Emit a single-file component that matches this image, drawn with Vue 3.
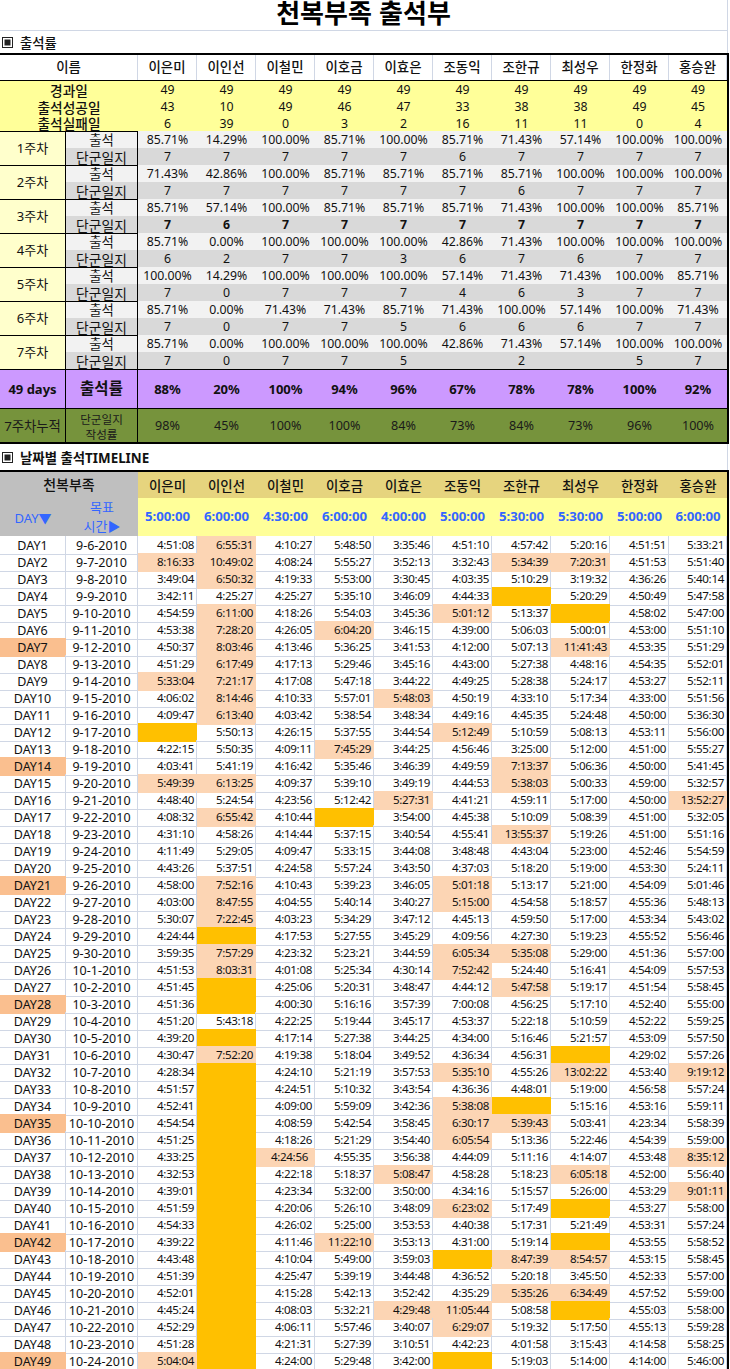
<template>
  <div class="page">
    <h1 class="title">천복부족 출석부</h1>

    <div class="section">
      <svg class="mark" width="11" height="11" viewBox="0 0 11 11">
        <rect x="0.5" y="0.5" width="10" height="10" fill="#fff" stroke="#222" />
        <rect x="2.5" y="2.5" width="6" height="6" fill="#222" />
      </svg>
      <span>출석률</span>
    </div>

    <!-- 출석률 표 -->
    <div class="sheet">
      <div class="row name-row">
        <div class="cell wide">이름</div>
        <div v-for="name in names" :key="name" class="cell">{{ name }}</div>
      </div>

      <div v-for="line in summary" :key="line.label" class="row sum-row">
        <div class="cell wide">{{ line.label }}</div>
        <div v-for="(v, i) in line.values" :key="i" class="cell num">{{ v }}</div>
      </div>

      <div v-for="(week, w) in weeks" :key="w" class="row week">
        <div class="cell week-label">{{ w + 1 }}주차</div>
        <div class="cell sub sub-top">출석</div>
        <div v-for="(v, i) in week.rate" :key="i" class="cell num light">{{ v }}</div>
        <div class="cell sub sub-bottom">단군일지</div>
        <div
          v-for="(v, i) in week.diary"
          :key="'d' + i"
          class="cell num dark"
          :class="{ bold: w === 2 }"
        >{{ v }}</div>
      </div>

      <div class="row purple">
        <div class="cell split days">49 days</div>
        <div class="cell split big">출석률</div>
        <div v-for="(v, i) in totalRate" :key="i" class="cell pct">{{ v }}</div>
      </div>

      <div class="row green">
        <div class="cell split acc">7주차누적</div>
        <div class="cell split note">단군일지<br />작성률</div>
        <div v-for="(v, i) in diaryRate" :key="i" class="cell green-num">{{ v }}</div>
      </div>
    </div>

    <div class="section section-2">
      <svg class="mark" width="11" height="11" viewBox="0 0 11 11">
        <rect x="0.5" y="0.5" width="10" height="10" fill="#fff" stroke="#222" />
        <rect x="2.5" y="2.5" width="6" height="6" fill="#222" />
      </svg>
      <span>날짜별 출석TIMELINE</span>
    </div>

    <!-- 날짜별 표 -->
    <div class="sheet timeline">
      <div class="head-grid">
        <div class="corner">
          <div class="corner-title">천복부족</div>
          <div class="corner-sub">
            <div class="corner-day">DAY▼</div>
            <div class="corner-goal">목표<br />시간▶</div>
          </div>
        </div>
        <div v-for="name in names" :key="name" class="gold">{{ name }}</div>
        <div v-for="(g, i) in goals" :key="i" class="goal">{{ g }}</div>
      </div>

      <div v-for="(row, r) in timeline" :key="r" class="row day-row">
        <div class="cell day" :class="{ sunday: (r + 1) % 7 === 0 }">DAY{{ r + 1 }}</div>
        <div class="cell date">{{ dateOf(r) }}</div>
        <div v-for="(t, i) in row" :key="i" class="cell time" :class="t.kind">{{ t.text }}</div>
      </div>
    </div>
  </div>
</template>

<script setup>
const names = ['이은미', '이인선', '이철민', '이호금', '이효은', '조동익', '조한규', '최성우', '한정화', '홍승완'];

const summary = [
  { label: '경과일', values: [49, 49, 49, 49, 49, 49, 49, 49, 49, 49] },
  { label: '출석성공일', values: [43, 10, 49, 46, 47, 33, 38, 38, 49, 45] },
  { label: '출석실패일', values: [6, 39, 0, 3, 2, 16, 11, 11, 0, 4] }
];

const pct = (list) => list.map((v) => v + '%');

const weeks = [
  { rate: pct(['85.71', '14.29', '100.00', '85.71', '100.00', '85.71', '71.43', '57.14', '100.00', '100.00']), diary: [7, 7, 7, 7, 7, 6, 7, 7, 7, 7] },
  { rate: pct(['71.43', '42.86', '100.00', '85.71', '85.71', '85.71', '85.71', '100.00', '100.00', '100.00']), diary: [7, 7, 7, 7, 7, 7, 6, 7, 7, 7] },
  { rate: pct(['85.71', '57.14', '100.00', '85.71', '85.71', '85.71', '71.43', '100.00', '100.00', '85.71']), diary: [7, 6, 7, 7, 7, 7, 7, 7, 7, 7] },
  { rate: pct(['85.71', '0.00', '100.00', '100.00', '100.00', '42.86', '71.43', '100.00', '100.00', '100.00']), diary: [6, 2, 7, 7, 3, 6, 7, 6, 7, 7] },
  { rate: pct(['100.00', '14.29', '100.00', '100.00', '100.00', '57.14', '71.43', '71.43', '100.00', '85.71']), diary: [7, 0, 7, 7, 7, 4, 6, 3, 7, 7] },
  { rate: pct(['85.71', '0.00', '71.43', '71.43', '85.71', '71.43', '100.00', '57.14', '100.00', '71.43']), diary: [7, 0, 7, 7, 5, 6, 6, 6, 7, 7] },
  { rate: pct(['85.71', '0.00', '100.00', '100.00', '100.00', '42.86', '71.43', '57.14', '100.00', '100.00']), diary: [7, 0, 7, 7, 5, '', 2, '', 5, 7] }
];

const totalRate = pct([88, 20, 100, 94, 96, 67, 78, 78, 100, 92]);
const diaryRate = pct([98, 45, 100, 100, 84, 73, 84, 73, 96, 100]);

const goals = ['5:00:00', '6:00:00', '4:30:00', '6:00:00', '4:00:00', '5:00:00', '5:30:00', '5:30:00', '5:00:00', '6:00:00'];

const raw = `
4:51:08 *6:55:31 4:10:27 5:48:50 3:35:46 4:51:10 4:57:42 5:20:16 4:51:51 5:33:21
*8:16:33 *10:49:02 4:08:24 5:55:27 3:52:13 3:32:43 *5:34:39 *7:20:31 4:51:53 5:51:40
3:49:04 *6:50:32 4:19:33 5:53:00 3:30:45 4:03:35 5:10:29 3:19:32 4:36:26 5:40:14
3:42:11 4:25:27 4:25:27 5:35:10 3:46:09 4:44:33 - 5:20:29 4:50:49 5:47:58
4:54:59 *6:11:00 4:18:26 5:54:03 3:45:36 *5:01:12 5:13:37 - 4:58:02 5:47:00
4:53:38 *7:28:20 4:26:05 *6:04:20 3:46:15 4:39:00 5:06:03 5:00:01 4:53:00 5:51:10
4:50:37 *8:03:46 4:13:46 5:36:25 3:41:53 4:12:00 5:07:13 *11:41:43 4:53:35 5:51:29
4:51:29 *6:17:49 4:17:13 5:29:46 3:45:16 4:43:00 5:27:38 4:48:16 4:54:35 5:52:01
*5:33:04 *7:21:17 4:17:08 5:47:18 3:44:22 4:49:25 5:28:38 5:24:17 4:53:27 5:52:11
4:06:02 *8:14:46 4:10:33 5:57:01 *5:48:03 4:50:19 4:33:10 5:17:34 4:33:00 5:51:56
4:09:47 *6:13:40 4:03:42 5:38:54 3:48:34 4:49:16 4:45:35 5:24:48 4:50:00 5:36:30
- 5:50:13 4:26:15 5:37:55 3:44:54 *5:12:49 5:10:59 5:08:13 4:53:11 5:56:00
4:22:15 5:50:35 4:09:11 *7:45:29 3:44:25 4:56:46 3:25:00 5:12:00 4:51:00 5:55:27
4:03:41 5:41:19 4:16:42 5:35:46 3:46:39 4:49:59 *7:13:37 5:06:36 4:50:00 5:41:45
*5:49:39 *6:13:25 4:09:37 5:39:10 3:49:19 4:44:53 *5:38:03 5:00:33 4:59:00 5:32:57
4:48:40 5:24:54 4:23:56 5:12:42 *5:27:31 4:41:21 4:59:11 5:17:00 4:50:00 *13:52:27
4:08:32 *6:55:42 4:10:44 - 3:54:00 4:45:38 5:10:09 5:08:39 4:51:00 5:32:05
4:31:10 4:58:26 4:14:44 5:37:15 3:40:54 4:55:41 *13:55:37 5:19:26 4:51:00 5:51:16
4:11:49 5:29:05 4:09:47 5:33:15 3:44:08 3:48:48 4:43:04 5:23:00 4:52:46 5:54:59
4:43:26 5:37:51 4:24:58 5:57:24 3:43:50 4:37:03 5:18:20 5:19:00 4:53:30 5:24:11
4:58:00 *7:52:16 4:10:43 5:39:23 3:46:05 *5:01:18 5:13:17 5:21:00 4:54:09 5:01:46
4:03:00 *8:47:55 4:04:55 5:40:14 3:40:27 *5:15:00 4:54:58 5:18:57 4:55:36 5:48:13
5:30:07 *7:22:45 4:03:23 5:34:29 3:47:12 4:45:13 4:59:50 5:17:00 4:53:34 5:43:02
4:24:44 - 4:17:53 5:27:55 3:45:29 4:09:56 4:27:30 5:19:23 4:55:52 5:56:46
3:59:35 *7:57:29 4:23:32 5:23:21 3:44:59 *6:05:34 *5:35:08 5:29:00 4:51:36 5:57:00
4:51:53 *8:03:31 4:01:08 5:25:34 4:30:14 *7:52:42 5:24:40 5:16:41 4:54:09 5:57:53
4:51:45 - 4:25:06 5:20:31 3:48:47 4:44:12 *5:47:58 5:19:17 4:51:54 5:58:45
4:51:36 - 4:00:30 5:16:16 3:57:39 7:00:08 4:56:25 5:17:10 4:52:40 5:55:00
4:51:20 5:43:18 4:22:25 5:19:44 3:45:17 4:53:37 5:22:18 5:10:59 4:52:22 5:59:25
4:39:20 - 4:17:14 5:27:38 3:44:25 4:34:00 5:16:46 5:21:57 4:53:09 5:57:50
4:30:47 *7:52:20 4:19:38 5:18:04 3:49:52 4:36:34 4:56:31 - 4:29:02 5:57:26
4:28:34 - 4:24:10 5:21:19 3:57:53 *5:35:10 4:55:26 *13:02:22 4:53:40 *9:19:12
4:51:57 - 4:24:51 5:10:32 3:43:54 4:36:36 4:48:01 5:19:00 4:56:58 5:57:24
4:52:41 - 4:09:00 5:59:09 3:42:36 *5:38:08 - 5:15:16 4:53:16 5:59:11
4:54:54 - 4:08:59 5:42:54 3:58:45 *6:30:17 *5:39:43 5:03:41 4:23:34 5:58:39
4:51:25 - 4:18:26 5:21:29 3:54:40 *6:05:54 5:13:36 5:22:46 4:54:39 5:59:00
4:33:25 - ^4:24:56 4:55:35 3:56:38 4:44:09 5:11:16 4:14:07 4:53:48 *8:35:12
4:32:53 - 4:22:18 5:18:37 *5:08:47 4:58:28 5:18:23 *6:05:18 4:52:00 5:56:40
4:39:01 - 4:23:34 5:32:00 3:50:00 4:34:16 5:15:57 5:26:00 4:53:29 *9:01:11
4:51:59 - 4:20:06 5:26:10 3:48:09 *6:23:02 5:17:49 - 4:53:27 5:58:00
4:54:33 - 4:26:02 5:25:00 3:53:53 4:40:38 5:17:31 5:21:49 4:53:31 5:57:24
4:39:22 - 4:11:46 *11:22:10 3:53:13 4:31:00 5:19:14 - 4:53:55 5:58:52
4:43:48 - 4:10:04 5:49:00 3:59:03 - *8:47:39 *8:54:57 4:53:15 5:58:45
4:51:39 - 4:25:47 5:39:19 3:44:48 4:36:52 5:20:18 3:45:50 4:52:33 5:57:00
4:52:01 - 4:15:28 5:42:13 3:52:42 4:35:29 *5:35:26 *6:34:49 4:57:52 5:59:00
4:45:24 - 4:08:03 5:32:21 *4:29:48 *11:05:44 5:08:58 - 4:55:03 5:58:00
4:52:29 - 4:06:11 5:57:46 3:40:07 *6:29:07 5:19:32 5:17:50 4:55:13 5:59:28
4:51:28 - 4:21:31 5:27:39 3:10:51 4:42:23 4:01:58 3:15:43 4:14:58 5:58:25
*5:04:04 - 4:24:00 5:29:48 3:42:00 - 5:19:03 5:14:00 4:14:00 5:46:00
`;

const parseTime = (s) => {
  if (s === '-') return { text: '', kind: 'absent' };
  if (s[0] === '*') return { text: s.slice(1), kind: 'late' };
  if (s[0] === '^') return { text: s.slice(1), kind: 'late indent' };
  return { text: s, kind: '' };
};

const timeline = raw.trim().split('\n').map((line) => line.split(' ').map(parseTime));

const dateOf = (r) => {
  const d = new Date(2010, 8, 6 + r);
  return `${d.getMonth() + 1}-${d.getDate()}-${d.getFullYear()}`;
};
</script>

<style scoped>
.page {
  width: 730px;
  height: 1369px;
  overflow: hidden;
  background: #fff;
  color: #111;
  font-family: "Noto Sans", "Noto Sans CJK KR", sans-serif;
}

/* ==================== 제목 ==================== */
.title {
  box-sizing: border-box;
  width: 728px;
  height: 31px;
  margin: 0;
  border-bottom: 1px solid #d0d7e5;
  border-right: 1px solid #d0d7e5;
  font-family: "Liberation Sans", "Noto Sans CJK KR", sans-serif;
  font-size: 26px;
  line-height: 29px;
  font-weight: 700;
  text-align: center;
  color: #000;
}

.section {
  box-sizing: border-box;
  width: 728px;
  height: 22px;
  padding-left: 2px;
  display: flex;
  align-items: center;
  gap: 7px;
  border-right: 1px solid #d0d7e5;
  font-size: 13.3px;
  font-weight: 500;
}

.section-2 {
  height: 26px;
  font-size: 13.4px;
  font-weight: 700;
}

.mark {
  flex: none;
}

/* ==================== 표 공통 ==================== */
.sheet {
  box-sizing: border-box;
  width: 729px;
  border-top: 2px solid #000;
  border-right: 2px solid #000;
}

.row {
  box-sizing: border-box;
  display: grid;
  grid-template-columns: 66px 72px repeat(9, 59px) 58px;
}

.cell {
  box-sizing: border-box;
  display: flex;
  align-items: center;
  justify-content: center;
  white-space: nowrap;
  line-height: 1;
}

.wide {
  grid-column: span 2;
}

/* ==================== 출석률 표 ==================== */
.name-row {
  height: 26px;
  font-size: 13.4px;
  font-weight: 500;
  border-bottom: 1px solid #000;
}

.name-row .cell {
  padding-top: 1px;
  border-right: 1px solid #d0d7e5;
}

.sum-row {
  height: 17px;
  background: #ffff99;
  font-size: 13.7px;
  font-weight: 500;
}

.sum-row .cell {
  padding-top: 2px;
}

.sum-row:nth-child(4) {
  height: 16px;
}

.num {
  padding-top: 2px;
  font-size: 12.3px;
  font-weight: 400;
}

.week {
  grid-template-rows: 17px 17px;
}

.week-label {
  grid-row: span 2;
  background: #ffffcc;
  border-top: 1px solid #000;
  border-right: 1px solid #000;
  font-size: 13px;
}

.sub {
  padding-top: 2px;
  background: #f2f2f2;
  border-right: 1px solid #000;
  font-size: 13.4px;
}

.sub-top {
  border-top: 1px solid #000;
}

.sub-bottom {
  background: #d9d9d9;
  font-size: 13.8px;
}

.light {
  background: #f2f2f2;
}

.dark {
  background: #d9d9d9;
}

.bold {
  font-weight: 700;
}

.purple {
  height: 39px;
  background: #cc99ff;
  border-top: 1px solid #000;
}

.green {
  height: 36px;
  background: #76933c;
  border-top: 1px solid #000;
  border-bottom: 2px solid #000;
  color: #1a1a1a;
}

.green .cell {
  padding-top: 2px;
}

.split {
  border-right: 1px solid #000;
}

.days {
  font-size: 13px;
  font-weight: 700;
}

.big {
  font-size: 15.5px;
  font-weight: 700;
}

.pct {
  font-size: 13px;
  font-weight: 700;
}

.acc {
  font-size: 13.4px;
  letter-spacing: -0.1px;
}

.note {
  font-size: 11.6px;
  line-height: 15px;
  text-align: center;
}

.green-num {
  font-size: 12.6px;
}

/* ==================== 날짜별 표 ==================== */
.head-grid {
  display: grid;
  grid-template-columns: 138px repeat(9, 59px) 58px;
  grid-template-rows: 26px 38px;
}

.corner {
  grid-row: span 2;
  background: #bfbfbf;
  display: flex;
  flex-direction: column;
}

.corner-title {
  height: 26px;
  line-height: 25px;
  text-align: center;
  font-size: 14px;
  font-weight: 500;
}

.corner-sub {
  flex: 1;
  display: grid;
  grid-template-columns: 66px 72px;
  align-items: center;
  text-align: center;
  color: #3366ff;
  font-size: 13px;
}

.corner-goal {
  line-height: 19px;
}

.gold {
  background: #e6d47e;
  display: flex;
  align-items: center;
  justify-content: center;
  font-size: 13.4px;
  font-weight: 500;
}

.goal {
  padding-bottom: 2px;
  background: #ffff99;
  display: flex;
  align-items: center;
  justify-content: center;
  color: #3366ff;
  font-size: 13.2px;
  font-weight: 700;
}

.day-row {
  height: 17px;
}

.day-row .cell {
  border-right: 1px solid #d0d7e5;
  border-bottom: 1px solid #d0d7e5;
  line-height: 16px;
}

.day,
.date {
  padding-top: 2px;
  font-size: 12.5px;
}

.day.sunday {
  background: #fabf8f;
  border-color: transparent !important;
}

.time {
  justify-content: flex-end !important;
  padding-right: 2px;
  font-size: 11.6px;
  letter-spacing: -0.33px;
}

.late {
  background: #fcd5b4;
  border-color: transparent !important;
}

.absent {
  background: #ffc000;
  border-color: transparent !important;
}

.indent {
  padding-right: 6px;
}
</style>
